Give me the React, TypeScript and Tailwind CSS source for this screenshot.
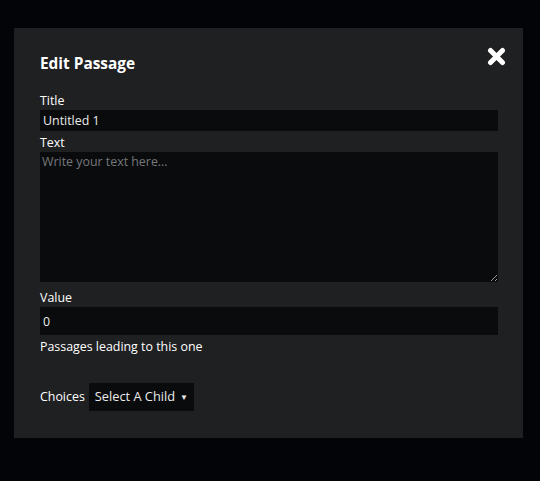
const App = () => {
  return (
    <div
      className="min-h-[481px] w-full bg-[#030407] px-[14px] pt-[28px]"
      style={{ fontFamily: '"Open Sans", "Noto Sans", sans-serif' }}
    >
      <div className="relative h-[410px] w-[509px] bg-[#1f2022] pl-[26px] pr-[25px] pt-[25px] text-[12.4px] text-white">
        {/* Close */}
        <button className="absolute right-[17px] top-[19px] h-[19px] w-[19px]">
          <svg viewBox="0 0 19 19" className="h-[19px] w-[19px]">
            <path d="M3.5 3.5 L15.5 15.5 M15.5 3.5 L3.5 15.5" stroke="white" strokeWidth="5" strokeLinecap="round" />
          </svg>
        </button>

        <h2 className="text-[15.4px] font-bold leading-[22px]">Edit Passage</h2>

        <div className="mt-[16px] leading-[19px]">Title</div>
        <input
          defaultValue="Untitled 1"
          className="block h-[21px] w-[458px] bg-[#0a0b0d] px-[3px] text-[12.4px] text-[#ececec] outline-none"
        />

        <div className="mt-[3px] leading-[18px]">Text</div>
        <textarea
          placeholder="Write your text here..."
          className="block h-[130px] w-[458px] bg-[#0a0b0d] px-[2px] py-[1px] text-[12.4px] text-white outline-none placeholder:text-[#76787c]"
        />

        <div className="mt-[6px] leading-[19px]">Value</div>
        <input
          defaultValue="0"
          className="block h-[28px] w-[458px] bg-[#0a0b0d] px-[3px] text-[12.4px] text-[#ececec] outline-none"
        />

        <div className="mt-[3px] leading-[18px]">Passages leading to this one</div>

        <div className="mt-[27px] flex items-center gap-[4px]">
          <span>Choices</span>
          <div className="flex h-[28px] w-[105px] items-center justify-between bg-[#0a0b0d] pl-[6px] pr-[6px] text-[12.8px] text-[#ececec]">
            <span>Select A Child</span>
            <span className="text-[8px]">▼</span>
          </div>
        </div>
      </div>
    </div>
  );
};

export default App;
